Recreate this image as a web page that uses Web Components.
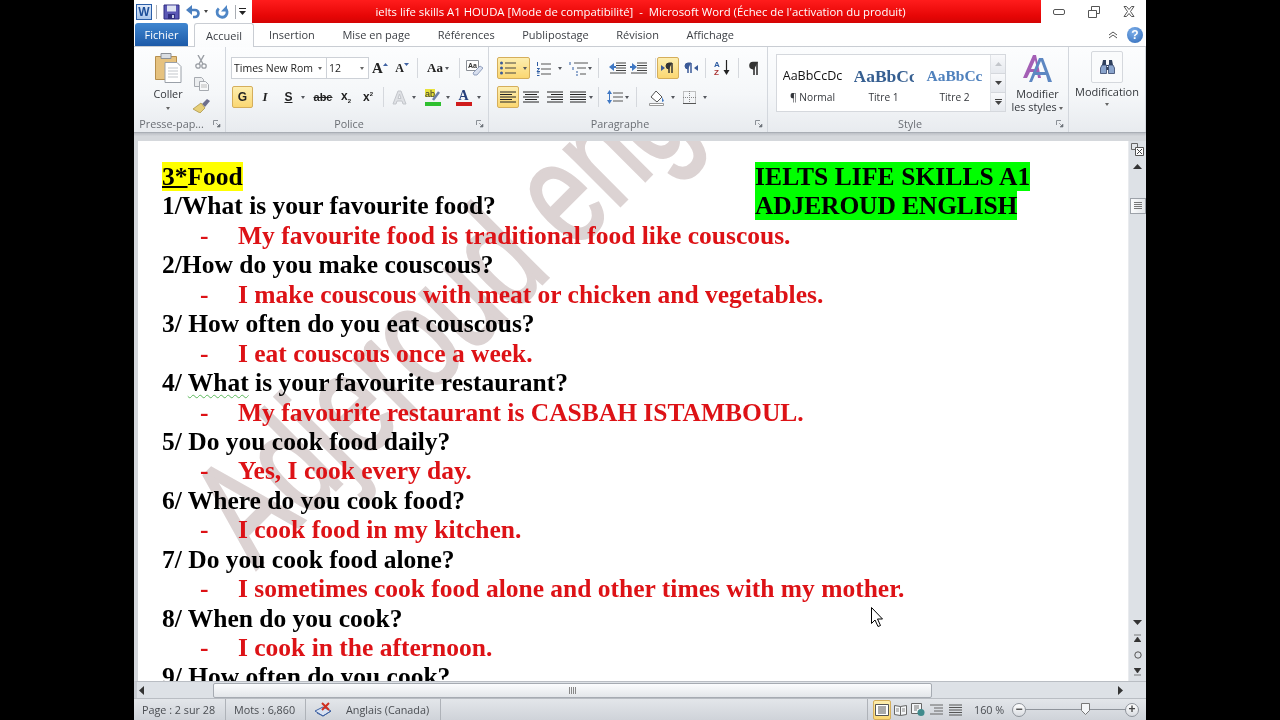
<!DOCTYPE html>
<html lang="fr">
<head>
<meta charset="utf-8">
<title>ielts life skills A1 HOUDA</title>
<style>
  html, body { margin: 0; height: 100%; background: #000; overflow: hidden; }
  body { font-family: "Open Sans", "Liberation Sans", sans-serif; }
</style>
</head>
<body>
<word-window>
  <title-bar></title-bar>
  <ribbon-tabs></ribbon-tabs>
  <word-ribbon></word-ribbon>
  <doc-view></doc-view>
  <status-bar></status-bar>
</word-window>

<script>
const ICONS = {
  save: '<svg width="17" height="16" viewBox="0 0 17 16"><path d="M1 1h15v14H1z" fill="#5a57b5" stroke="#2f2d80"/><path d="M4 1.500h9v6H4z" fill="#dfe3f2"/><path d="M5 10h7v5H5z" fill="#2f2d80"/><path d="M9 11h2v3H9z" fill="#c9cfe8"/></svg>',
  undo: '<svg width="14" height="14" viewBox="0 0 14 14"><path d="M4 5h5a3.500 3.500 0 0 1 0 7H7" fill="none" stroke="#4a7fc0" stroke-width="2.600"/><path d="M6 0v10L0 5z" fill="#4a7fc0"/></svg>',
  redo: '<svg width="14" height="14" viewBox="0 0 14 14"><path d="M10 3.200a5 5 0 1 1-6.200.3" fill="none" stroke="#4f86c6" stroke-width="2.800"/><path d="M12 0v6.500H6z" fill="#4f86c6"/></svg>',
  qat: '<svg width="7" height="9" viewBox="0 0 7 9"><path d="M0 1.500h7" stroke="#222"/><path d="M0 4h7L3.500 8z" fill="#222"/></svg>',
  paste: '<svg width="28" height="32" viewBox="0 0 28 32"><path d="M1.500 4.500h21v23h-21z" fill="#e6c27f" stroke="#b68f4e"/><path d="M7 1.500h10v5H7z" fill="#d9dde2" stroke="#8a8f96"/><path d="M11 10.500h12l4 4v16H11z" fill="#fff" stroke="#9aa0a8"/><path d="M14 16h10M14 19h10M14 22h10M14 25h10" stroke="#c3c7cc"/></svg>',
  cut: '<svg width="12" height="14" viewBox="0 0 12 14"><path d="M3 0l5 9M9 0L4 9" stroke="#9a9ea4" stroke-width="1.400"/><circle cx="3" cy="11" r="2.200" fill="none" stroke="#9a9ea4" stroke-width="1.300"/><circle cx="9" cy="11" r="2.200" fill="none" stroke="#9a9ea4" stroke-width="1.300"/></svg>',
  copy: '<svg width="15" height="14" viewBox="0 0 15 14"><path d="M.5.500h7l2 2v7h-9z" fill="#eceef0" stroke="#a6aab0"/><path d="M5.500 4.500h6l3 3v6h-9z" fill="#f7f8f9" stroke="#a6aab0"/><path d="M7 8h6M7 10h6" stroke="#bbb"/></svg>',
  brush: '<svg width="17" height="14" viewBox="0 0 17 14"><path d="M9 5l5-5 3 2-5 6z" fill="#6d6f8c"/><path d="M0 10l8-6 4 5-5 5z" fill="#e7cf78" stroke="#a58c3e" stroke-width=".7"/></svg>',
  clear: '<svg width="17" height="16" viewBox="0 0 17 16"><path d="M.5.500h12v10H.5z" fill="#fff" stroke="#8a8f96"/><text x="2" y="8" font-family="Liberation Sans" font-weight="700" font-size="7" fill="#333">Aa</text><path d="M7 13l7-7 3 2-6 7H8z" fill="#d8dfee" stroke="#7c8db0" stroke-width=".8"/></svg>',
  ghosta: '<svg width="15" height="15" viewBox="0 0 15 15"><path d="M1 14L6 1h3l5 13h-3l-1-3H5l-1 3zM6 8.500h3L7.500 4z" fill="#dfe1e5" stroke="#c3c6cb"/></svg>',
  high: '<svg width="16" height="17" viewBox="0 0 16 17"><rect x="0" y="0" width="10" height="8" fill="#e8e23c"/><text x="0" y="8" font-family="Liberation Sans" font-size="9" fill="#333">ab</text><path d="M8 11l6-8" stroke="#6d7fa8" stroke-width="2.500"/><path d="M0 13h16v4H0z" fill="#2fc02f"/></svg>',
  fcolor: '<svg width="16" height="17" viewBox="0 0 16 17"><text x="2.500" y="11" font-family="Liberation Serif" font-weight="700" font-size="14" fill="#26407c">A</text><path d="M0 13h16v4H0z" fill="#d01c1c"/></svg>',
  bullets: '<svg width="16" height="14" viewBox="0 0 16 14"><path d="M5 2h11M5 7h11M5 12h11" stroke="#444"/><circle cx="1.500" cy="2" r="1.500" fill="#3a5a98"/><circle cx="1.500" cy="7" r="1.500" fill="#3a5a98"/><circle cx="1.500" cy="12" r="1.500" fill="#3a5a98"/></svg>',
  numbers: '<svg width="15" height="15" viewBox="0 0 15 15"><path d="M5 3h10M5 8h10M5 13h10" stroke="#555"/><path d="M1.500 1v4M1 7.500h2.500L1 10.500h3M1 12h2.500M1 14.500h2.500" stroke="#2f5da3" fill="none"/></svg>',
  multi: '<svg width="19" height="15" viewBox="0 0 19 15"><path d="M5 2h14M8 7h9M11 13h6" stroke="#555"/><path d="M1 1v3M4 6v3M7 11h2M7 14h2" stroke="#2f5da3"/></svg>',
  outdent: '<svg width="17" height="13" viewBox="0 0 17 13"><path d="M7 1h10M7 3.500h10M7 6h10M7 8.500h10M1 11h16" stroke="#444"/><path d="M0 5l5-4v3h2v2H5v3z" fill="#3f78c4"/></svg>',
  indent: '<svg width="17" height="13" viewBox="0 0 17 13"><path d="M7 1h10M7 3.500h10M7 6h10M7 8.500h10M1 11h16" stroke="#444"/><path d="M7 5L2 1v3H0v2h2v3z" fill="#3f78c4"/></svg>',
  ltr: '<svg width="14" height="12" viewBox="0 0 14 12"><path d="M0 3l4 3-4 3z" fill="#3a5a98"/><path d="M8 11V1M11 11V1" stroke="#333" stroke-width="1.500"/><path d="M11 1H8a3 3 0 0 0 0 6" fill="#333" stroke="#333"/></svg>',
  rtl: '<svg width="14" height="12" viewBox="0 0 14 12"><path d="M14 3l-4 3 4 3z" fill="#3a5a98"/><path d="M4 11V1M7 11V1" stroke="#3a5a98" stroke-width="1.500"/><path d="M7 1H4a3 3 0 0 0 0 6" fill="#3a5a98" stroke="#3a5a98"/></svg>',
  sort: '<svg width="17" height="16" viewBox="0 0 17 16"><text x="0" y="7" font-family="Liberation Sans" font-weight="700" font-size="8" fill="#2f5da3">A</text><text x="0" y="15" font-family="Liberation Sans" font-weight="700" font-size="8" fill="#a33">Z</text><path d="M12.500 0v13" stroke="#222" stroke-width="1.200"/><path d="M9.500 10l3 5 3-5z" fill="#222"/></svg>',
  pilcrow: '<svg width="11" height="14" viewBox="0 0 11 14"><path d="M6 14V1M9 14V1" stroke="#333" stroke-width="1.600"/><path d="M10 .8H5a3.800 3.800 0 0 0 0 7.600h1z" fill="#333"/></svg>',
  left: '<svg width="16" height="13" viewBox="0 0 16 13"><path d="M0 1h16M0 3.500h12M0 6h16M0 8.500h12M0 11h16" stroke="#222"/></svg>',
  center: '<svg width="16" height="13" viewBox="0 0 16 13"><path d="M0 1h16M2 3.500h12M0 6h16M2 8.500h12M0 11h16" stroke="#222"/></svg>',
  right: '<svg width="16" height="13" viewBox="0 0 16 13"><path d="M0 1h16M4 3.500h12M0 6h16M4 8.500h12M0 11h16" stroke="#222"/></svg>',
  justify: '<svg width="16" height="13" viewBox="0 0 16 13"><path d="M0 1h16M0 3.500h16M0 6h16M0 8.500h16M0 11h16" stroke="#222"/></svg>',
  spacing: '<svg width="16" height="16" viewBox="0 0 16 16"><path d="M6 4h10M6 8h10M6 12h10" stroke="#555"/><path d="M0 5l2.500-4L5 5zM0 11l2.500 4L5 11z" fill="#3f78c4"/><path d="M2.500 4v8" stroke="#3f78c4"/></svg>',
  shade: '<svg width="16" height="17" viewBox="0 0 16 17"><path d="M2 8l5-6 6 6-5 5z" fill="#fff" stroke="#555"/><path d="M13 8l2 4-2 1z" fill="#3f78c4"/><path d="M.5 14.500h14v2H.5z" fill="#fff" stroke="#999"/></svg>',
  borders: '<svg width="13" height="13" viewBox="0 0 13 13"><path d="M.5.500h12v12H.5z" fill="none" stroke="#888" stroke-dasharray="1 1"/><path d="M6.500 0v13M0 6.500h13" stroke="#888" stroke-dasharray="1 1"/><path d="M0 12.500h13" stroke="#555"/></svg>',
  styles: '<svg width="32" height="29" viewBox="0 0 32 29"><path d="M1 24L11 1h3l5 23h-3l-1-6H8l-3 6zM9 15h6l-2-9z" fill="#a45fb5"/><path d="M7 28L17 4h4l9 24h-4l-2-7H13l-3 7zM14 18h9l-4-11z" fill="#5d87c2"/></svg>',
  find: '<svg width="15" height="14" viewBox="0 0 15 14"><path d="M3 0h3v6h3V0h3l1 5H2z" fill="#2f3f5c"/><path d="M2 5h4.500v8.500H.5V8zM8.500 5H13l1.500 3v5.500h-6z" fill="#8aa4cc" stroke="#33456a" stroke-width=".8"/><path d="M6.500 7h2v3h-2z" fill="#2f3f5c"/></svg>',
  launcher: '<svg width="8" height="8" viewBox="0 0 8 8"><path d="M.5 5V.5H5" fill="none" stroke="#8a8f96"/><path d="M3 3l3 3M7 4v3H4z" stroke="#6d7279" fill="#6d7279" stroke-width=".6"/></svg>',
  ruler: '<svg width="13" height="13" viewBox="0 0 13 13"><path d="M.5.500h6v6h-6z" fill="#e4e7eb" stroke="#666"/><path d="M4.500 4.500h8v8h-8z" fill="#fff" stroke="#555"/><path d="M6 6l5 5M11 6l-5 5" stroke="#444"/></svg>',
  proof: '<svg width="18" height="15" viewBox="0 0 18 15"><path d="M1 9l8-4 8 4-8 5z" fill="#d8e2f2" stroke="#3f62a3"/><path d="M3 11l6 3 8-5" fill="none" stroke="#3f62a3"/><path d="M8 1l7 7M15 1L8 8" stroke="#d03020" stroke-width="2"/></svg>',
  vprint: '<svg width="14" height="12" viewBox="0 0 14 12"><path d="M.5.500h13v11H.5z" fill="#fff" stroke="#555"/><path d="M3 3h8M3 5h8M3 7h8M3 9h8" stroke="#555"/></svg>',
  vread: '<svg width="13" height="12" viewBox="0 0 13 12"><path d="M.5 1.500l6 1 6-1v9l-6 1-6-1zM6.500 2.500v9" fill="#f4f6f8" stroke="#666"/><path d="M2 5h3M2 7h3M8 5h3M8 7h3" stroke="#888"/></svg>',
  vweb: '<svg width="14" height="13" viewBox="0 0 14 13"><path d="M.5.500h10v10H.5z" fill="#f4f6f8" stroke="#666"/><path d="M3 3h5M3 5h5M3 7h3" stroke="#777"/><circle cx="10" cy="9.500" r="3.500" fill="#3f8a8c"/></svg>',
  voutline: '<svg width="13" height="12" viewBox="0 0 13 12"><path d="M0 1h13M4 4h9M4 7h9M0 10h13" stroke="#666"/></svg>',
  vdraft: '<svg width="13" height="12" viewBox="0 0 13 12"><path d="M0 1h13M0 3.500h13M0 6h13M0 8.500h13M0 11h13" stroke="#555"/></svg>'
};

const FACE = '"Open Sans", "Liberation Sans", sans-serif';

class RbIcon extends HTMLElement {
  connectedCallback() {
    const root = this.attachShadow({ mode: 'open' });
    root.innerHTML = `<style>:host{display:inline-flex;line-height:0}</style>${ICONS[this.getAttribute('name')] || ''}`;
  }
}
customElements.define('rb-icon', RbIcon);

// one ribbon button, w = width, on = orange state, drop = small arrow after the content
class RbBtn extends HTMLElement {
  connectedCallback() {
    const root = this.attachShadow({ mode: 'open' });
    const w = this.getAttribute('w') || 22;
    const h = this.getAttribute('h') || 22;
    root.innerHTML = `
      <style>
        :host {
          display: inline-flex; align-items: center; justify-content: center; gap: 5px;
          box-sizing: border-box; width: ${w}px; height: ${h}px; flex: none; color: #222;
        }
        :host([on]) {
          background: linear-gradient(#fdeeb0, #fbd772); border: 1px solid #d5ae5b; border-radius: 2px;
        }
        .drop { width: 0; height: 0; border: 2.500px solid transparent; border-top: 3px solid #55585e; border-bottom: 0; }
      </style>
      <slot></slot>${this.hasAttribute('drop') ? '<span class="drop"></span>' : ''}`;
  }
}
customElements.define('rb-btn', RbBtn);

class RbGroup extends HTMLElement {
  connectedCallback() {
    const root = this.attachShadow({ mode: 'open' });
    const launch = this.hasAttribute('launch');
    root.innerHTML = `
      <style>
        :host {
          display: flex; flex-direction: column; box-sizing: border-box; flex: none;
          width: ${this.getAttribute('w')}px; height: 85px; border-right: 1px solid #d3d7dd;
        }
        .body { flex: 1; min-height: 0; display: flex; }
        .label {
          height: 17px; flex: none; display: flex; align-items: center; justify-content: center;
          position: relative; font-size: 10.800px; color: #6a6e74;
          padding: 0 ${launch ? 16 : 0}px 0 0; box-sizing: border-box;
        }
        .launch { position: absolute; right: 4px; top: 5px; }
      </style>
      <div class="body"><slot></slot></div>
      <div class="label">${this.getAttribute('label')}${launch ? '<rb-icon class="launch" name="launcher"></rb-icon>' : ''}</div>`;
  }
}
customElements.define('rb-group', RbGroup);

class TitleBar extends HTMLElement {
  connectedCallback() {
    const root = this.attachShadow({ mode: 'open' });
    root.innerHTML = `
      <style>
        :host { display: flex; height: 23px; background: #fff; flex: none; font-family: ${FACE}; }
        .qat { width: 118px; flex: none; display: flex; align-items: center; padding-left: 2px; box-sizing: border-box; }
        .logo {
          width: 14px; height: 14px; border: 1px solid #2a5ea8; background: linear-gradient(#dfeafa, #a9c6ec);
          color: #1d4f9a; font: 700 12px/14px "Liberation Sans", sans-serif; text-align: center; flex: none;
        }
        .bar { width: 1px; height: 14px; background: #a9adb3; flex: none; }
        .tip { width: 0; height: 0; border: 2.500px solid transparent; border-top: 3px solid #444; border-bottom: 0; }
        .title {
          width: 789px; flex: none; display: flex; align-items: center; justify-content: center; box-sizing: border-box;
          padding-right: 12px;
          background: linear-gradient(#ff1c1c, #e60606 70%, #d40404); color: #fff; font-size: 11.350px; white-space: pre;
        }
        .ctrl { flex: 1; display: flex; align-items: center; }
        .ctrl div { width: 35px; display: flex; justify-content: center; }
      </style>
      <div class="qat">
        <span class="logo">W</span><span class="bar" style="margin:0 6px 0 4px"></span>
        <rb-icon name="save"></rb-icon><rb-icon name="undo" style="margin-left:6px"></rb-icon>
        <span class="tip" style="margin:0 7px 0 4px"></span><rb-icon name="redo"></rb-icon>
        <span class="bar" style="margin:0 3px 0 6px"></span><rb-icon name="qat"></rb-icon>
      </div>
      <div class="title">ielts life skills A1 HOUDA [Mode de compatibilité]  -  Microsoft Word (Échec de l'activation du produit)</div>
      <div class="ctrl">
        <div><svg width="12" height="6" viewBox="0 0 12 6"><rect x=".5" y=".5" width="11" height="5" rx="1.500" fill="#fff" stroke="#555"/></svg></div>
        <div><svg width="12" height="12" viewBox="0 0 12 12"><path d="M3.500.500h8v7h-8z" fill="#fff" stroke="#555"/><path d="M.5 4.500h8v7h-8z" fill="#fff" stroke="#555"/></svg></div>
        <div><svg width="12" height="11" viewBox="0 0 12 11"><path d="M1 .5h2.500L6 3.500 8.500.5H11L7.500 5.500 11 10.500H8.500L6 7.500 3.500 10.500H1L4.500 5.500z" fill="#fff" stroke="#555"/></svg></div>
      </div>`;
  }
}
customElements.define('title-bar', TitleBar);

class RibbonTabs extends HTMLElement {
  connectedCallback() {
    const root = this.attachShadow({ mode: 'open' });
    const names = ['Insertion', 'Mise en page', 'Références', 'Publipostage', 'Révision', 'Affichage'];
    root.innerHTML = `
      <style>
        :host {
          display: flex; align-items: flex-end; height: 24px; flex: none; box-sizing: border-box;
          background: #fff; font: 11px ${FACE}; color: #3d4046; padding-left: 1px;
          border-bottom: 1px solid #c9cdd3;
        }
        .file {
          width: 53px; height: 23px; box-sizing: border-box; display: flex; align-items: center; justify-content: center;
          background: linear-gradient(#3f86d0, #1d5aa8); color: #fff; border-radius: 3px 3px 0 0;
        }
        .home {
          width: 60px; height: 24px; margin: 0 15px 0 6px; box-sizing: border-box; display: flex; align-items: center; justify-content: center;
          background: linear-gradient(#fff, #fbfcfd); border: 1px solid #c9cdd3; border-bottom: 0; border-radius: 3px 3px 0 0;
          position: relative; top: 1px;
        }
        .tab { margin-right: 27.600px; height: 23px; display: flex; align-items: center; }
        .tools { margin-left: auto; height: 23px; display: flex; align-items: center; gap: 9px; padding-right: 3px; }
        .help {
          width: 16px; height: 16px; border-radius: 50%; background: radial-gradient(circle at 40% 30%, #7fb0ea, #2c68b8);
          color: #fff; font: 700 12px/16px "Liberation Sans", sans-serif; text-align: center;
        }
      </style>
      <div class="file">Fichier</div>
      <div class="home">Accueil</div>
      ${names.map(n => `<div class="tab">${n}</div>`).join('')}
      <div class="tools">
        <svg width="10" height="8" viewBox="0 0 10 8"><path d="M1 4l4-3 4 3M1 7l4-3 4 3" fill="none" stroke="#555"/></svg>
        <div class="help">?</div>
      </div>`;
  }
}
customElements.define('ribbon-tabs', RibbonTabs);

class WordRibbon extends HTMLElement {
  connectedCallback() {
    const root = this.attachShadow({ mode: 'open' });
    root.innerHTML = `
      <style>
        :host {
          display: flex; height: 86px; flex: none; box-sizing: border-box; border-bottom: 1px solid #a9aeb5;
          background: linear-gradient(#fcfdfe, #f5f7f9 55%, #e8ebef);
          font: 10.800px ${FACE}; color: #33363b;
        }
        .rows { display: flex; flex-direction: column; gap: 7px; padding-top: 10px; }
        .row { display: flex; align-items: center; height: 22px; }
        .sep { width: 1px; height: 20px; background: #d5d8dd; flex: none; }
        .combo {
          box-sizing: border-box; height: 22px; flex: none; display: flex; align-items: center; padding: 0 2px;
          background: #fff; border: 1px solid #cdd1d7; font-size: 10.500px; color: #222;
        }
        .combo span { flex: 1; white-space: nowrap; overflow: hidden; }
        .tri { width: 0; height: 0; border: 2.500px solid transparent; border-top: 3px solid #666; border-bottom: 0; margin: 0 2px; }
        .paste { width: 52px; margin-left: 8px; display: flex; flex-direction: column; align-items: center; padding-top: 5px; flex: none; }
        .paste span { margin-top: 2px; }
        .clip { display: flex; flex-direction: column; align-items: center; gap: 8px; padding-top: 8px; width: 14px; flex: none; }
        .gallery {
          margin: 7px 0 0 8px; width: 230px; height: 58px; box-sizing: border-box; flex: none; display: flex;
          background: #fff; border: 1px solid #d5d8dd;
        }
        .sty { display: flex; flex-direction: column; align-items: center; width: 71px; flex: none; overflow: hidden; padding-top: 10px; }
        .sty b { white-space: nowrap; height: 22px; display: block; line-height: 22px; width: 60px; overflow: hidden; text-align: center; }
        .sty i { font-style: normal; margin-top: 3px; font-size: 10.200px; color: #33363b; }
        .arrows { margin-left: auto; width: 15px; display: flex; flex-direction: column; border-left: 1px solid #dfe2e6; }
        .arrows div { flex: 1; display: flex; align-items: center; justify-content: center; background: linear-gradient(#f8f9fb, #e6e9ee); border-bottom: 1px solid #d5d8dd; }
        .big { display: flex; flex-direction: column; align-items: center; text-align: center; line-height: 13px; }
        .mod { width: 32px; height: 32px; box-sizing: border-box; margin-top: 2px; border: 1px solid #d5d8dd; border-radius: 2px; background: #fafbfc; display: flex; align-items: center; justify-content: center; }
      </style>

      <rb-group w="92" label="Presse-pap..." launch>
        <div class="paste">
          <rb-icon name="paste"></rb-icon>
          <span>Coller</span>
          <span class="tri" style="margin-top:6px"></span>
        </div>
        <div class="clip">
          <rb-icon name="cut"></rb-icon><rb-icon name="copy"></rb-icon><rb-icon name="brush"></rb-icon>
        </div>
      </rb-group>

      <rb-group w="263" label="Police" launch>
        <div class="rows" style="padding-left:5px">
          <div class="row">
            <div class="combo" style="width:96px"><span>Times New Rom</span><i class="tri"></i></div>
            <div class="combo" style="width:43px;margin-left:-1px"><span>12</span><i class="tri"></i></div>
            <rb-btn w="22"><b style="font:700 15px 'Liberation Serif'">A</b><svg width="5" height="3" style="margin:-8px 0 0 -5px"><path d="M0 3l2.500-3L5 3z" fill="#3f62a3"/></svg></rb-btn>
            <rb-btn w="22"><b style="font:700 12px 'Liberation Serif'">A</b><svg width="5" height="3" style="margin:-8px 0 0 -5px"><path d="M0 0l2.500 3L5 0z" fill="#3f62a3"/></svg></rb-btn>
            <span class="sep" style="margin:0 7px 0 4px"></span>
            <rb-btn w="26" drop style="gap:2px"><b style="font:700 13px 'Liberation Serif'">Aa</b></rb-btn>
            <span class="sep" style="margin:0 3px 0 8px"></span>
            <rb-btn w="22"><rb-icon name="clear"></rb-icon></rb-btn>
          </div>
          <div class="row">
            <rb-btn w="21" on style="margin-left:1px"><b style="font:700 12px 'Liberation Sans'">G</b></rb-btn>
            <rb-btn w="22" style="margin-left:1px"><i style="font:italic 700 13px 'Liberation Serif'">I</i></rb-btn>
            <rb-btn w="33" drop style="margin-left:2px;gap:8px"><u style="font:700 12px 'Liberation Sans'">S</u></rb-btn>
            <rb-btn w="24"><s style="font:700 11px 'Liberation Sans'">abe</s></rb-btn>
            <rb-btn w="22"><b style="font:700 12px 'Liberation Sans'">x<sub style="font-size:6px">2</sub></b></rb-btn>
            <rb-btn w="22"><b style="font:700 12px 'Liberation Sans'">x<sup style="font-size:6px">2</sup></b></rb-btn>
            <span class="sep" style="margin:0 4px"></span>
            <rb-btn w="31" drop><rb-icon name="ghosta"></rb-icon></rb-btn>
            <rb-btn w="32" drop style="margin-left:2px"><rb-icon name="high"></rb-icon></rb-btn>
            <rb-btn w="31" drop><rb-icon name="fcolor"></rb-icon></rb-btn>
          </div>
        </div>
      </rb-group>

      <rb-group w="279" label="Paragraphe" launch>
        <div class="rows" style="padding-left:8px">
          <div class="row">
            <rb-btn w="33" on drop style="gap:7px;padding-left:2px;justify-content:flex-start"><rb-icon name="bullets"></rb-icon></rb-btn>
            <rb-btn w="32" drop style="margin-left:3px;gap:7px"><rb-icon name="numbers"></rb-icon></rb-btn>
            <rb-btn w="30" drop style="gap:0"><rb-icon name="multi"></rb-icon></rb-btn>
            <span class="sep" style="margin:0 8px 0 3px"></span>
            <rb-btn w="20"><rb-icon name="outdent"></rb-icon></rb-btn>
            <rb-btn w="20" style="margin-left:1px"><rb-icon name="indent"></rb-icon></rb-btn>
            <span class="sep" style="margin:0 1px 0 7px"></span>
            <rb-btn w="22" on><rb-icon name="ltr"></rb-icon></rb-btn>
            <rb-btn w="20" style="margin-left:2px"><rb-icon name="rtl"></rb-icon></rb-btn>
            <span class="sep" style="margin:0 6px 0 4px"></span>
            <rb-btn w="20"><rb-icon name="sort"></rb-icon></rb-btn>
            <span class="sep" style="margin:0 7px 0 6px"></span>
            <rb-btn w="14"><rb-icon name="pilcrow"></rb-icon></rb-btn>
          </div>
          <div class="row">
            <rb-btn w="22" on><rb-icon name="left"></rb-icon></rb-btn>
            <rb-btn w="24" style="margin-left:0"><rb-icon name="center"></rb-icon></rb-btn>
            <rb-btn w="24"><rb-icon name="right"></rb-icon></rb-btn>
            <rb-btn w="28" drop style="gap:3px"><rb-icon name="justify"></rb-icon></rb-btn>
            <span class="sep" style="margin:0 6px 0 3px"></span>
            <rb-btn w="26" drop style="gap:2px"><rb-icon name="spacing"></rb-icon></rb-btn>
            <span class="sep" style="margin:0 9px 0 5px"></span>
            <rb-btn w="31" drop style="gap:6px"><rb-icon name="shade"></rb-icon></rb-btn>
            <rb-btn w="32" drop style="margin-left:2px;gap:7px"><rb-icon name="borders"></rb-icon></rb-btn>
          </div>
        </div>
      </rb-group>

      <rb-group w="301" label="Style" launch>
        <div class="gallery">
          <div class="sty"><b style="font:400 12.500px/22px 'Open Sans',sans-serif;color:#111">AaBbCcDc</b><i>¶ Normal</i></div>
          <div class="sty"><b style="font:700 17.500px/22px 'Liberation Serif',serif;color:#365f91">AaBbCc</b><i>Titre 1</i></div>
          <div class="sty"><b style="font:700 15.500px/22px 'Liberation Serif',serif;color:#4f81bd">AaBbCc</b><i>Titre 2</i></div>
          <div class="arrows">
            <div><svg width="7" height="4"><path d="M0 4l3.500-4L7 4z" fill="#c3c6cb"/></svg></div>
            <div><svg width="7" height="4"><path d="M0 0l3.500 4L7 0z" fill="#444"/></svg></div>
            <div style="border:0"><svg width="7" height="6"><path d="M0 .5h7" stroke="#444"/><path d="M0 2l3.500 4L7 2z" fill="#444"/></svg></div>
          </div>
        </div>
        <div class="big" style="width:61px;margin-left:1px;padding-top:7px">
          <rb-icon name="styles" style="margin-bottom:4px"></rb-icon>
          <span>Modifier</span>
          <span>les styles <i class="tri" style="display:inline-block;vertical-align:middle;margin:0"></i></span>
        </div>
      </rb-group>

      <rb-group w="77" label="">
        <div class="big" style="width:100%;padding-top:2px">
          <div class="mod"><rb-icon name="find"></rb-icon></div>
          <span style="margin-top:2px;font-size:11px">Modification</span>
          <i class="tri" style="margin-top:5px"></i>
        </div>
      </rb-group>`;
  }
}
customElements.define('word-ribbon', WordRibbon);

class QaLine extends HTMLElement {
  connectedCallback() {
    const root = this.attachShadow({ mode: 'open' });
    root.innerHTML = `
      <style>
        :host { display: block; height: 29.450px; line-height: 29.450px; white-space: nowrap; color: #000; position: relative; }
        :host([answer]) { color: #dd1216; padding-left: 76px; }
        .dash { position: absolute; left: 38px; }
      </style>
      ${this.hasAttribute('answer') ? '<span class="dash">-</span>' : ''}<slot></slot>`;
  }
}
customElements.define('qa-line', QaLine);

class DocView extends HTMLElement {
  connectedCallback() {
    const root = this.attachShadow({ mode: 'open' });
    root.innerHTML = `
      <style>
        :host { display: grid; grid-template-columns: 1fr 18px; grid-template-rows: 8px minmax(0, 1fr) 17px; flex: 1; min-height: 0; background: #dfe3e8; }
        .top { grid-column: 1 / 3; background: linear-gradient(#bcc0c6, #d5d8dc 40%); }
        .view {
          position: relative; overflow: hidden; background: #fff; border-left: 4px solid #d5d8dc; min-height: 0;
          padding: 21px 0 0 24px;
          font: 700 25.500px "Liberation Serif", serif;
        }
        .mark {
          position: absolute; left: 28px; top: 339px; transform: rotate(-45deg) scaleX(.7); transform-origin: 0 0;
          font: 400 150px/1 "Liberation Sans", sans-serif; color: #dcd3d3; -webkit-text-stroke: 3px #dcd3d3; white-space: nowrap;
        }
        .lines { position: relative; }
        .head { background: #ff0; }
        .head u { text-decoration-thickness: 2px; }
        .box {
          position: absolute; left: 617px; top: 21px; line-height: 29px; white-space: pre;
        }
        .box span { background: #0f0; }
        .wavy { text-decoration: underline wavy #5cb85c 1px; text-underline-offset: 3px; }
        .vs { display: flex; flex-direction: column; align-items: center; background: #dde1e6; min-height: 0; border-left: 1px solid #e9ebee; }
        .thumb { width: 16px; height: 16px; box-sizing: border-box; border: 1px solid #9da2a9; background: linear-gradient(90deg, #fbfcfd, #e3e6ea); display: flex; align-items: center; justify-content: center; margin-top: 29px; }
        .hs { grid-column: 1; background: #dde1e6; display: flex; align-items: center; border-top: 1px solid #b9bdc3; border-left: 3px solid #c8ccd2; }
        .hthumb {
          width: 719px; height: 15px; box-sizing: border-box; margin-left: 69px; border: 1px solid #a6abb2; border-radius: 2px; background: linear-gradient(#fbfcfd, #e3e6ea);
          display: flex; align-items: center; justify-content: center;
        }
        .corner { background: #dde1e6; border-top: 1px solid #b9bdc3; }
      </style>
      <div class="top"></div>
      <div class="view">
        <div class="mark">Adjeroud eng</div>
        <div class="lines">
          <qa-line><span class="head"><u>3*</u>Food</span></qa-line>
          <qa-line>1/What is your favourite food?</qa-line>
          <qa-line answer>My favourite food is traditional food like couscous.</qa-line>
          <qa-line>2/How do you make couscous?</qa-line>
          <qa-line answer>I make couscous with meat or chicken and vegetables.</qa-line>
          <qa-line>3/ How often do you eat couscous?</qa-line>
          <qa-line answer>I eat couscous once a week.</qa-line>
          <qa-line>4/ <span class="wavy">What</span> is your favourite restaurant?</qa-line>
          <qa-line answer>My favourite restaurant is CASBAH ISTAMBOUL.</qa-line>
          <qa-line>5/ Do you cook food daily?</qa-line>
          <qa-line answer>Yes, I cook every day.</qa-line>
          <qa-line>6/ Where do you cook food?</qa-line>
          <qa-line answer>I cook food in my kitchen.</qa-line>
          <qa-line>7/ Do you cook food alone?</qa-line>
          <qa-line answer>I sometimes cook food alone and other times with my mother.</qa-line>
          <qa-line>8/ When do you cook?</qa-line>
          <qa-line answer>I cook in the afternoon.</qa-line>
          <qa-line>9/ How often do you cook?</qa-line>
        </div>
        <div class="box"><span style="letter-spacing:.1px">IELTS LIFE SKILLS A1</span>
<span style="letter-spacing:-.12px">ADJEROUD ENGLISH</span></div>
      </div>
      <div class="vs">
        <rb-icon name="ruler" style="margin-top:2px"></rb-icon>
        <svg width="9" height="5" style="margin-top:8px"><path d="M0 5l4.500-5L9 5z" fill="#333"/></svg>
        <div class="thumb"><svg width="8" height="8"><path d="M0 .5h8M0 2.500h8M0 4.500h8M0 6.500h8" stroke="#777"/></svg></div>
        <svg width="9" height="5" style="margin-top:auto"><path d="M0 0l4.500 5L9 0z" fill="#333"/></svg>
        <svg width="7" height="8" style="margin-top:9px"><path d="M0 1h7M0 8l3.500-5L7 8z" stroke="#333" fill="#333" stroke-width=".6"/></svg>
        <svg width="8" height="8" style="margin-top:9px"><circle cx="4" cy="4" r="3.200" fill="none" stroke="#555"/></svg>
        <svg width="7" height="8" style="margin:9px 0 5px"><path d="M0 7h7M0 0l3.500 5L7 0z" stroke="#333" fill="#333" stroke-width=".6"/></svg>
      </div>
      <div class="hs">
        <svg width="5" height="9" style="margin-left:2px;flex:none"><path d="M5 0L0 4.500 5 9z" fill="#333"/></svg>
        <div class="hthumb"><svg width="8" height="7"><path d="M.5 0v7M2.500 0v7M4.500 0v7M6.500 0v7" stroke="#888"/></svg></div>
        <svg width="5" height="9" style="margin-left:auto;margin-right:5px;flex:none"><path d="M0 0l5 4.500L0 9z" fill="#333"/></svg>
      </div>
      <div class="corner"></div>`;
  }
}
customElements.define('doc-view', DocView);

class StatusBar extends HTMLElement {
  connectedCallback() {
    const root = this.attachShadow({ mode: 'open' });
    root.innerHTML = `
      <style>
        :host {
          display: flex; align-items: center; height: 22px; flex: none; box-sizing: border-box;
          background: linear-gradient(#e3e6ea, #cfd3d9); border-top: 1px solid #b9bdc3;
          font: 10.800px ${FACE}; color: #4a4d52; white-space: nowrap;
        }
        .cell { display: flex; align-items: center; height: 100%; box-sizing: border-box; border-right: 1px solid #aeb2b8; flex: none; }
        .views { display: flex; align-items: center; margin-left: 5px; }
        .views rb-btn { height: 20px; }
        .circle { width: 14px; height: 14px; box-sizing: border-box; border-radius: 50%; border: 1px solid #8f949b; background: linear-gradient(#fff, #d9dce1); font: 700 12px/11px "Liberation Sans", sans-serif; color: #444; text-align: center; flex: none; }
        .slide { width: 101px; height: 1px; background: #8f949b; position: relative; flex: none; }
        .knob { position: absolute; left: 56px; top: -6px; }
      </style>
      <div class="cell" style="width:92px;padding-left:8px">Page : 2 sur 28</div>
      <div class="cell" style="width:80px;padding-left:8px">Mots : 6,860</div>
      <div class="cell" style="width:135px;padding-left:8px"><rb-icon name="proof"></rb-icon><span style="margin-left:14px">Anglais (Canada)</span></div>
      <div class="cell" style="width:427px"></div>
      <div class="views">
        <rb-btn w="18" on><rb-icon name="vprint"></rb-icon></rb-btn>
        <rb-btn w="18"><rb-icon name="vread"></rb-icon></rb-btn>
        <rb-btn w="18"><rb-icon name="vweb"></rb-icon></rb-btn>
        <rb-btn w="19"><rb-icon name="voutline"></rb-icon></rb-btn>
        <rb-btn w="18"><rb-icon name="vdraft"></rb-icon></rb-btn>
      </div>
      <span style="margin-left:10px;width:38px">160 %</span>
      <span class="circle">−</span>
      <div class="slide" style="margin:0 -1px"><svg class="knob" width="9" height="12"><path d="M.5.500h8v7L4.500 11.500.5 7.500z" fill="#f4f6f8" stroke="#777"/></svg></div>
      <span class="circle">+</span>`;
  }
}
customElements.define('status-bar', StatusBar);

class WordWindow extends HTMLElement {
  connectedCallback() {
    const root = this.attachShadow({ mode: 'open' });
    root.innerHTML = `
      <style>
        :host {
          display: flex; flex-direction: column; width: 1012px; height: 720px; margin: 0 auto;
          background: #fff; position: relative; overflow: hidden; filter: blur(.3px);
        }
        .cursor { position: absolute; left: 737px; top: 607px; }
      </style>
      <slot></slot>
      <svg class="cursor" width="13" height="20" viewBox="0 0 13 20"><path d="M.5.500v16l3.500-3.500 3 6.500 2.500-1-3-6.500h5z" fill="#fff" stroke="#000"/></svg>`;
  }
}
customElements.define('word-window', WordWindow);
</script>
</body>
</html>
